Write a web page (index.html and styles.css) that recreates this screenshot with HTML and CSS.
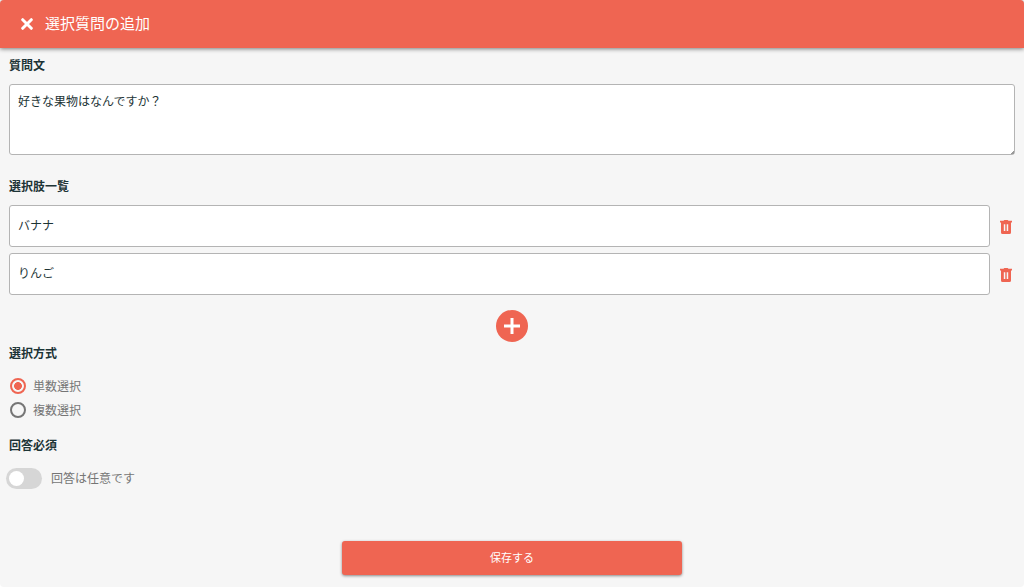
FILE: index.html
```html
<!DOCTYPE html>
<html lang="ja">
<head>
<meta charset="utf-8">
<meta name="viewport" content="width=device-width, initial-scale=1">
<title>選択質問の追加</title>
<link rel="stylesheet" href="styles.css">
</head>
<body>
<form class="dialog">
  <header class="toolbar">
    <button class="icon-button close" type="button" aria-label="閉じる">
      <svg width="12" height="12" viewBox="0 0 12 12"><path d="M1.7 1.7L10.3 10.3M10.3 1.7L1.7 10.3" fill="none" stroke="currentColor" stroke-width="3" stroke-linecap="round"/></svg>
    </button>
    <h1 class="title">選択質問の追加</h1>
  </header>
  <main class="content">
    <section class="section">
      <label class="heading" for="question">質問文</label>
      <textarea class="field question" id="question">好きな果物はなんですか？</textarea>
    </section>
    <section class="section choices">
      <h2 class="heading">選択肢一覧</h2>
      <ul class="choice-list">
        <li class="choice">
          <input class="field choice-input" type="text" value="バナナ" aria-label="選択肢1">
          <button class="icon-button delete" type="button" aria-label="選択肢1を削除">
            <svg width="12" height="14" viewBox="0 0 12 14"><path fill="currentColor" fill-rule="evenodd" d="M0 .8H3.5L4.3 0H7.7L8.5 .8H12V2.6H11V12.5Q11 14 9.5 14H2.5Q1 14 1 12.5V2.6H0ZM3.8 4.2V11H5.3V4.2ZM6.7 4.2V11H8.2V4.2Z"/></svg>
          </button>
        </li>
        <li class="choice">
          <input class="field choice-input" type="text" value="りんご" aria-label="選択肢2">
          <button class="icon-button delete" type="button" aria-label="選択肢2を削除">
            <svg width="12" height="14" viewBox="0 0 12 14"><path fill="currentColor" fill-rule="evenodd" d="M0 .8H3.5L4.3 0H7.7L8.5 .8H12V2.6H11V12.5Q11 14 9.5 14H2.5Q1 14 1 12.5V2.6H0ZM3.8 4.2V11H5.3V4.2ZM6.7 4.2V11H8.2V4.2Z"/></svg>
          </button>
        </li>
      </ul>
      <button class="icon-button add" type="button" aria-label="選択肢を追加">
        <svg width="16" height="16" viewBox="0 0 16 16"><path d="M8 0V16M0 8H16" fill="none" stroke="currentColor" stroke-width="3"/></svg>
      </button>
    </section>
    <fieldset class="section methods">
      <legend class="heading">選択方式</legend>
      <label class="option"><input class="radio" type="radio" name="method" checked>単数選択</label>
      <label class="option"><input class="radio" type="radio" name="method">複数選択</label>
    </fieldset>
    <section class="section">
      <h2 class="heading">回答必須</h2>
      <label class="option toggle"><input class="switch" type="checkbox" role="switch">回答は任意です</label>
    </section>
    <button class="save" type="submit">保存する</button>
  </main>
</form>
</body>
</html>
```
FILE: styles.css
```css
:root {
  --accent: #ef6552;
  --ink: #1d3436;
  --muted: #757575;
}

* {
  box-sizing: border-box;
}

body {
  margin: 0;
  background: #fff;
  font: 12px/18px "Noto Sans CJK JP", sans-serif;
  color: var(--ink);
}

button, input, textarea {
  margin: 0;
  font: inherit;
  color: inherit;
}

.dialog {
  min-height: 100vh;
  border-radius: 4px;
  background: #f6f6f6;
}

.toolbar {
  display: flex;
  align-items: center;
  gap: 12px;
  height: 48px;
  padding: 0 21px;
  border-radius: 4px 4px 0 0;
  background: var(--accent);
  box-shadow: 0 1px 4px rgba(0, 0, 0, 0.5);
  color: #fff;
}

.title {
  margin: 0;
  padding-bottom: 2px;
  font-size: 15px;
  font-weight: 400;
  line-height: 24px;
}

.icon-button {
  display: flex;
  align-items: center;
  justify-content: center;
  flex: none;
  padding: 0;
  border: 0;
  background: none;
  cursor: pointer;
}

.content {
  display: flex;
  flex-direction: column;
  padding: 8px 9px 12px;
}

.section {
  display: flex;
  flex-direction: column;
  min-width: 0;
  margin: 0;
  padding: 0;
  border: 0;
}

.heading {
  margin: 0 0 10px;
  padding: 0;
  font-size: 12px;
  font-weight: 700;
}

.field {
  width: 100%;
  padding: 7px 8px;
  border: 1px solid #b4b4b4;
  border-radius: 3px;
  background: #fff;
}

.question {
  display: block;
  height: 71px;
  resize: vertical;
}

.question::-webkit-resizer {
  background: linear-gradient(135deg, transparent 90%, #999 90%);
}

.choices {
  margin-top: 22px;
}

.choice-list {
  display: flex;
  flex-direction: column;
  gap: 6px;
  margin: 0;
  padding: 0;
  list-style: none;
}

.choice {
  display: flex;
  align-items: center;
  gap: 7px;
}

.choice-input {
  flex: 1;
  min-width: 0;
  height: 42px;
  padding: 0 8px 4px;
}

.delete {
  width: 18px;
  height: 24px;
  padding-top: 2px;
  color: var(--accent);
}

.add {
  align-self: center;
  width: 32px;
  height: 32px;
  margin: 15px 0 2px;
  border-radius: 50%;
  background: var(--accent);
  color: #fff;
}

.methods {
  margin-bottom: 14px;
}

.option {
  display: flex;
  align-items: center;
  gap: 7px;
  height: 24px;
  color: var(--muted);
}

.methods .heading {
  margin-bottom: 12px;
}

.radio {
  appearance: none;
  width: 16px;
  height: 16px;
  margin-left: 1px;
  border: 2px solid var(--muted);
  border-radius: 50%;
}

.radio:checked {
  border-color: var(--accent);
  background: radial-gradient(circle closest-side, var(--accent) 60%, transparent 70%);
}

.toggle {
  gap: 9px;
  margin: 2px 0 0 -3px;
}

.switch {
  display: flex;
  appearance: none;
  width: 36px;
  height: 21px;
  padding: 3px;
  border-radius: 11px;
  background: #d6d6d6;
}

.switch::before {
  content: "";
  width: 15px;
  height: 15px;
  border-radius: 50%;
  background: #fff;
}

.switch:checked {
  justify-content: flex-end;
  background: var(--accent);
}

.save {
  align-self: center;
  width: 100%;
  max-width: 340px;
  height: 34px;
  margin-top: 51px;
  padding: 0 0 2px;
  border: 0;
  border-radius: 3px;
  background: var(--accent);
  box-shadow: 0 1px 3px rgba(0, 0, 0, 0.45);
  color: #fff;
  font-size: 11px;
  cursor: pointer;
}
```
